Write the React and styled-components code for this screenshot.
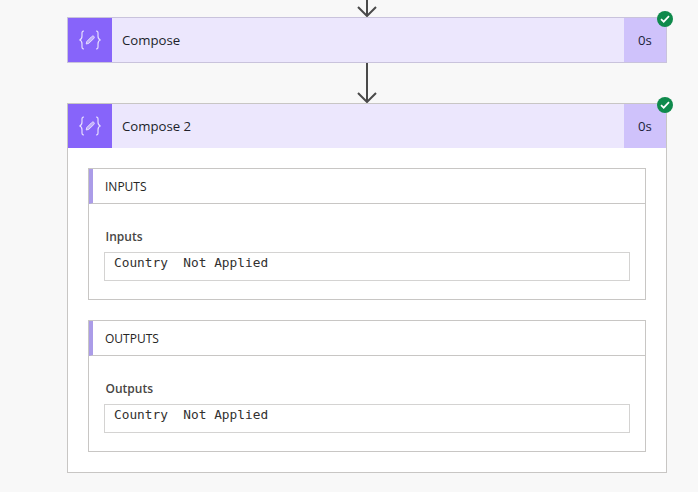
import React from 'react'
import styled, { createGlobalStyle } from 'styled-components'

const GlobalStyle = createGlobalStyle`
  html, body {
    margin: 0;
    height: 100%;
    overflow: hidden;
    background: #f8f8f8;
    font-family: 'Open Sans', 'Noto Sans', sans-serif;
    color: #252423;
  }
`

const Page = styled.div`
  width: 600px;
  height: 492px;
  margin-left: 67px;
  display: flex;
  flex-direction: column;
  align-items: center;
`

const TopStub = styled.div`
  height: 17px;
  display: flex;
  align-items: flex-end;
`

const Connector = styled.div`
  height: 40px;
  display: flex;
  align-items: flex-end;
`

const Card = styled.div`
  width: 600px;
  box-sizing: border-box;
  position: relative;
  background: ${({ $expanded }) => ($expanded ? '#fff' : 'transparent')};
  border: 1px solid ${({ $expanded }) => ($expanded ? '#c8c6c4' : '#c9c3dc')};
`

const CardHeader = styled.div`
  height: 44px;
  display: flex;
  align-items: stretch;
  background: #ece7fd;
`

const IconBox = styled.div`
  width: 44px;
  display: flex;
  align-items: center;
  justify-content: center;
  background: #8764fa;
`

const CardTitle = styled.div`
  flex: 1;
  padding-left: 10px;
  font-size: 13.2px;
  line-height: 44px;
  color: #201f2b;
`

const Duration = styled.div`
  width: 42px;
  background: #cfc2fb;
  font-size: 13.2px;
  line-height: 44px;
  text-align: center;
  color: #201f3b;
`

const StatusBadge = styled.div`
  position: absolute;
  top: -7px;
  right: -7px;
  width: 16px;
  height: 16px;
  border-radius: 50%;
  background: #0f8a4c;
  display: flex;
  align-items: center;
  justify-content: center;
`

const CardBody = styled.div`
  padding: 20px;
  display: flex;
  flex-direction: column;
  gap: 20px;
`

const Section = styled.div`
  border: 1px solid #c8c6c4;
  background: #fff;
  height: 132px;
  box-sizing: border-box;
`

const SectionHeader = styled.div`
  height: 35px;
  box-sizing: border-box;
  border-left: 4px solid #ab9ce8;
  border-bottom: 1px solid #c8c6c4;
  padding-left: 12px;
  font-size: 12px;
  line-height: 35px;
  color: #252423;
`

const SectionContent = styled.div`
  padding: 24px 15px 0;
`

const FieldLabel = styled.div`
  font-size: 12px;
  font-weight: 600;
  line-height: 17px;
  padding-left: 1.5px;
  color: #484644;
`

const FieldValue = styled.div`
  margin-top: 7px;
  height: 29px;
  box-sizing: border-box;
  border: 1px solid #d4d3d2;
  padding-left: 9px;
  font-family: 'DejaVu Sans Mono', 'Liberation Mono', monospace;
  font-size: 12.8px;
  line-height: 19px;
  white-space: pre;
  color: #323130;
`

function ArrowDown({ height }) {
  const bottom = height - 1
  return (
    <svg width="22" height={height} viewBox={`0 0 22 ${height}`} fill="none" stroke="#4a4a4a" strokeWidth="2">
      <path d={`M11 0V${bottom}`} />
      <path d={`M2 ${bottom - 9}L11 ${bottom}L20 ${bottom - 9}`} />
    </svg>
  )
}

function ComposeIcon() {
  return (
    <svg width="26" height="24" viewBox="0 0 26 24" fill="none" stroke="#e6defe" strokeWidth="1.2">
      <path d="M7 3C4.500 3 5 5 5 8C5 10.500 4.500 11.500 2.500 12C4.500 12.500 5 13.500 5 16C5 19 4.500 21 7 21" />
      <path d="M19 3C21.500 3 21 5 21 8C21 10.500 21.500 11.500 23.500 12C21.500 12.500 21 13.500 21 16C21 19 21.500 21 19 21" />
      <path d="M9.200 16L9.800 13.500L14.800 8.500C15.500 7.800 16.300 7.800 16.900 8.400C17.500 9 17.500 9.800 16.800 10.500L11.700 15.400Z" strokeWidth="1" fill="#e6defe" fillOpacity="0.6" />
    </svg>
  )
}

function CheckIcon() {
  return (
    <svg width="10" height="8" viewBox="0 0 10 8" fill="none" stroke="#fff" strokeWidth="1.7">
      <path d="M1 4.200L3.700 6.700L9 1.200" />
    </svg>
  )
}

function ActionHeader({ title }) {
  return (
    <>
      <CardHeader>
        <IconBox>
          <ComposeIcon />
        </IconBox>
        <CardTitle>{title}</CardTitle>
        <Duration>0s</Duration>
      </CardHeader>
      <StatusBadge>
        <CheckIcon />
      </StatusBadge>
    </>
  )
}

function ParamSection({ heading, label, value }) {
  return (
    <Section>
      <SectionHeader>{heading}</SectionHeader>
      <SectionContent>
        <FieldLabel>{label}</FieldLabel>
        <FieldValue>{value}</FieldValue>
      </SectionContent>
    </Section>
  )
}

export default function App() {
  return (
    <Page>
      <GlobalStyle />
      <TopStub>
        <ArrowDown height={17} />
      </TopStub>
      <Card>
        <ActionHeader title="Compose" />
      </Card>
      <Connector>
        <ArrowDown height={40} />
      </Connector>
      <Card $expanded>
        <ActionHeader title="Compose 2" />
        <CardBody>
          <ParamSection heading="INPUTS" label="Inputs" value="Country  Not Applied" />
          <ParamSection heading="OUTPUTS" label="Outputs" value="Country  Not Applied" />
        </CardBody>
      </Card>
    </Page>
  )
}
